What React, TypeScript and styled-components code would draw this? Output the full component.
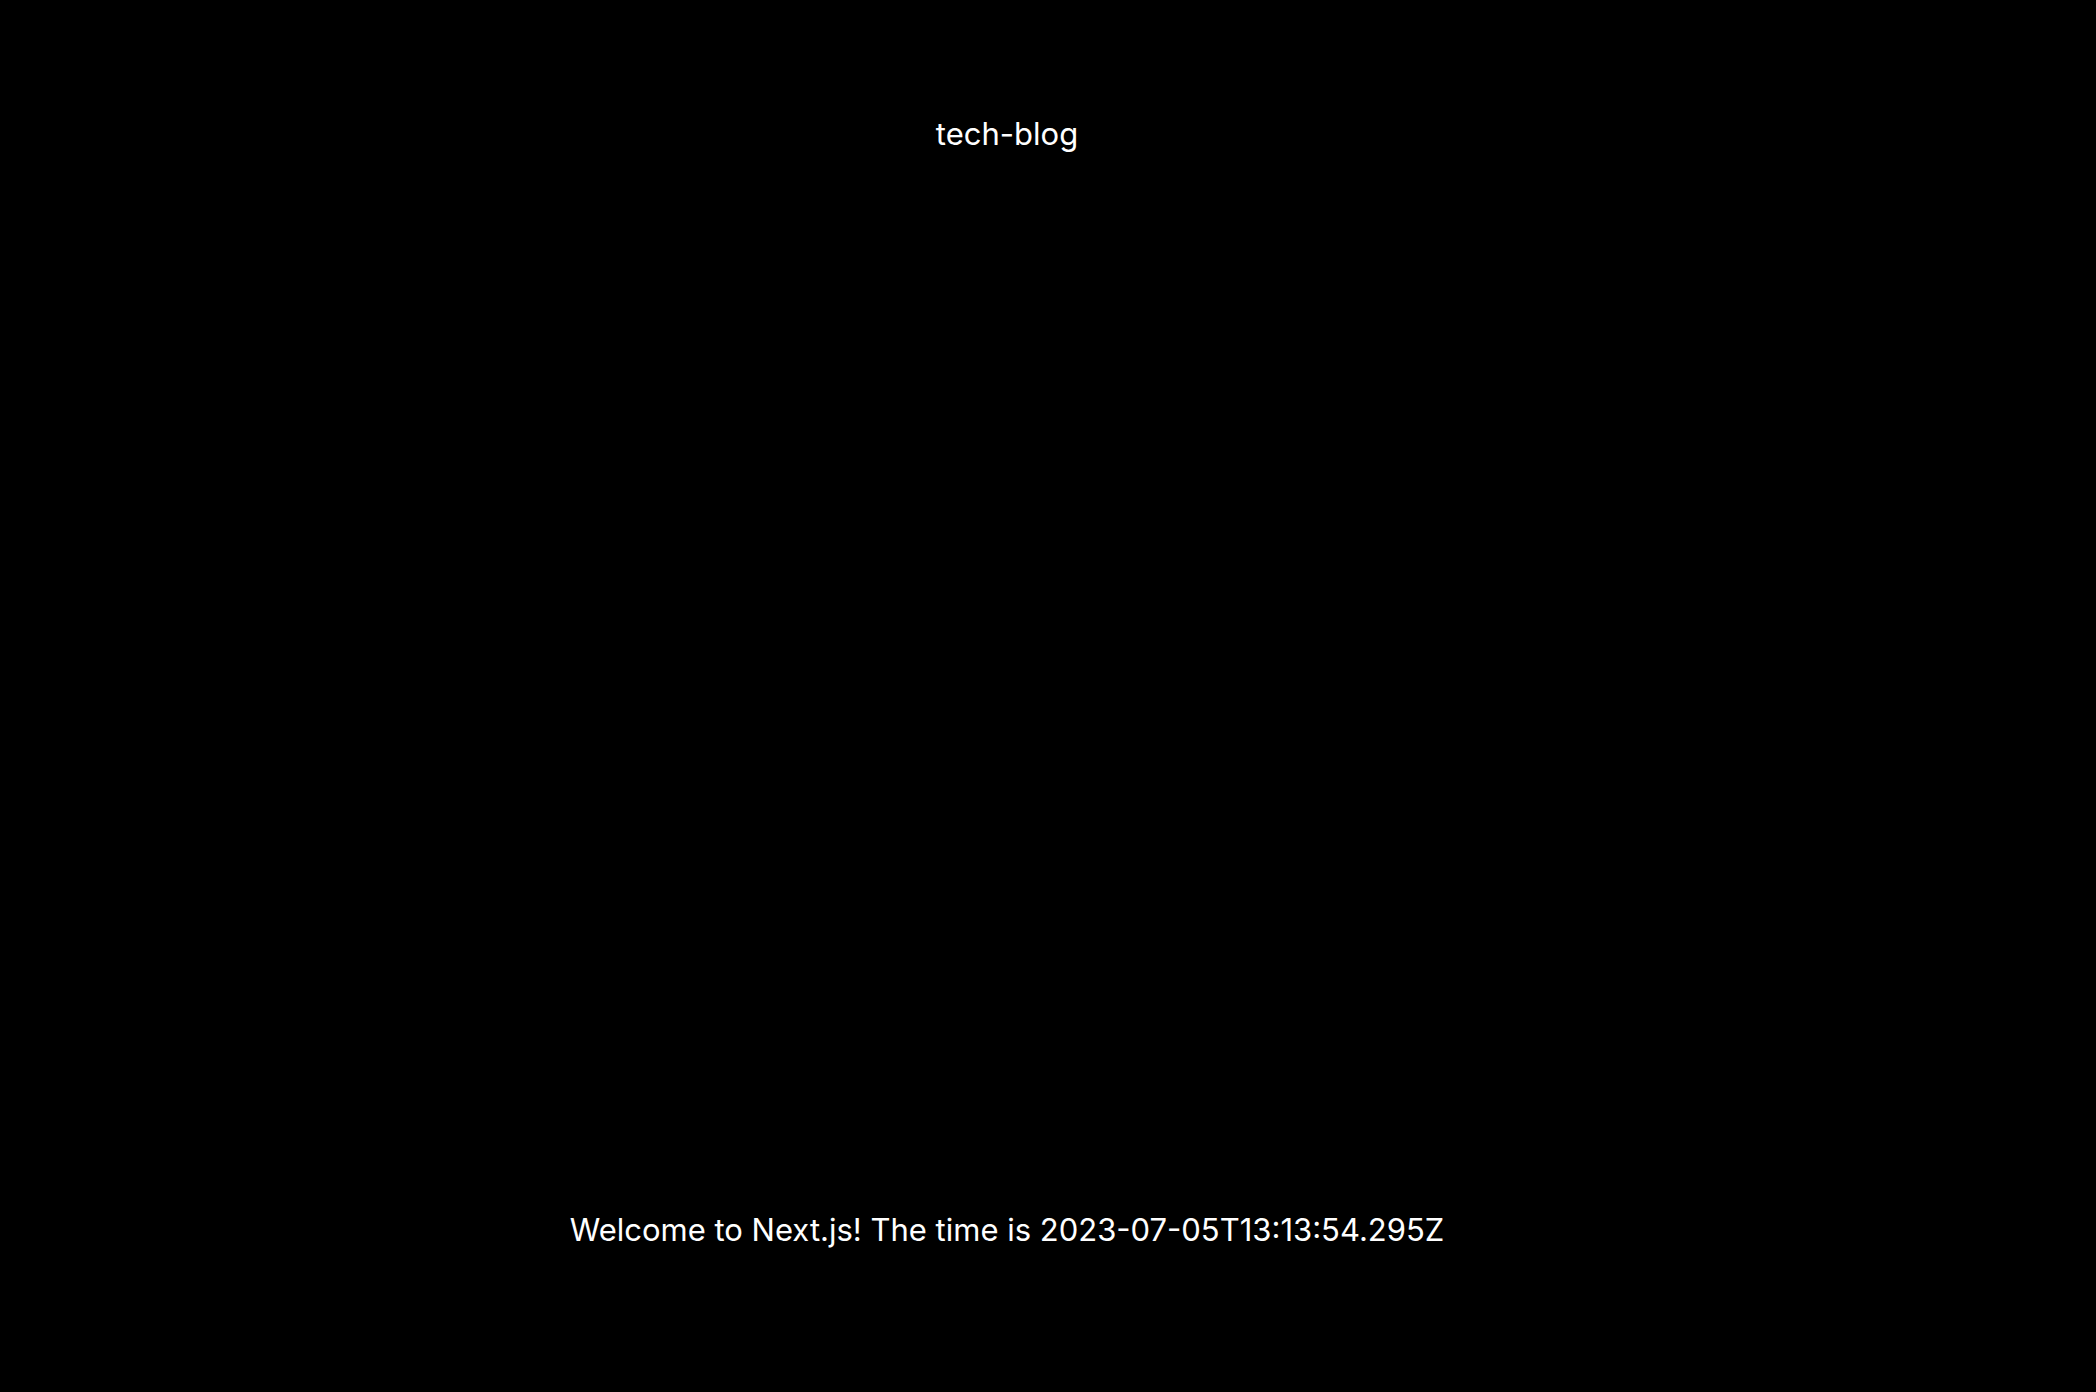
import React from "react";
import styled, { createGlobalStyle } from "styled-components";

const Global = createGlobalStyle`
  html, body { margin: 0; padding: 0; background: #000; }
  body { font-family: Inter, "Noto Sans", sans-serif; color: #fff; }
`;

const Page = styled.main`
  box-sizing: border-box;
  width: 2096px;
  height: 1392px;
  padding: 0 82px 0 0;
  display: flex;
  flex-direction: column;
  align-items: center;
  background: #000;
`;

const Header = styled.header`
  margin-top: 116px;
  font-size: 31px;
  line-height: 36px;
  font-weight: 400;
  letter-spacing: 0;
`;

const Spacer = styled.div`
  flex: 1;
`;

const Welcome = styled.p`
  margin: 0 0 144px;
  font-size: 31px;
  line-height: 36px;
  font-weight: 400;
`;

export default function App() {
  return (
    <>
      <Global />
      <Page>
        <Header>tech-blog</Header>
        <Spacer />
        <Welcome>Welcome to Next.js! The time is 2023-07-05T13:13:54.295Z</Welcome>
      </Page>
    </>
  );
}
